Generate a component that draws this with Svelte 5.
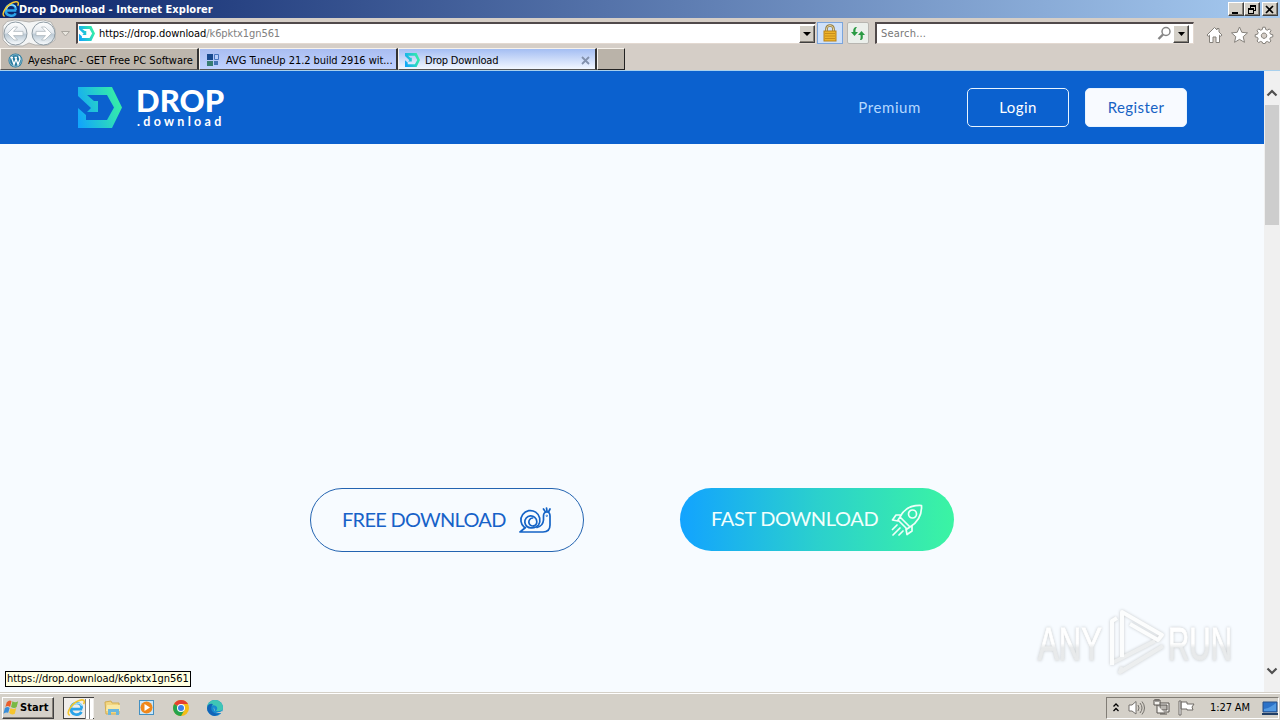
<script>
  const address = { host: 'drop.download', path: '/k6pktx1gn561' };

  let tabs = [
    { title: 'AyeshaPC - GET Free PC Software', icon: 'wordpress' },
    { title: 'AVG TuneUp 21.2 build 2916 wit...', icon: 'squares' },
    { title: 'Drop Download', icon: 'drop' }
  ];
  let current = 2;
</script>

{#snippet drop(size)}
  <svg class="drop" width={size} height={size * 41 / 44} viewBox="0 0 44 41" preserveAspectRatio="none">
    <defs>
      <linearGradient id="drop{size}" x1="0" y1="0.8" x2="1" y2="0.5">
        <stop offset="0" stop-color="#12a5fb" />
        <stop offset="1" stop-color="#36efa6" />
      </linearGradient>
    </defs>
    <path fill="url(#drop{size})" d="M0 0H34L44 20.5L34 41H0V21L8 28V33H29L36 20.5L29 8H9L16 14H20V25H9L13 21L0 9Z" />
  </svg>
{/snippet}

{#snippet explorer(size)}
  <svg width={size} height={size} viewBox="0 0 16 16" fill="none">
    <path d="M13.5 9H4.4M13.1 8.5C13 1.8 4 2 3.5 8.5C3.3 14.8 11 15.2 12.8 11.5" stroke="#2ba4ea" stroke-width="2.4" />
    <path d="M13 6C12 2.8 5.5 2.5 4.2 8" stroke="#a5e6ff" stroke-width="1" />
    <path d="M2.5 14.5C-2 13 5 2 13 .8C16 .5 15.7 3 14.7 4.5" stroke="#f3c630" stroke-width="1.4" />
  </svg>
{/snippet}

<div class="screen">
  <header class="titlebar">
    {@render explorer(17)}
    <span class="title">Drop Download - Internet Explorer</span>
    <div class="controls">
      <button title="Minimize"><svg width="10" height="9"><path d="M1 7H7V9H1Z" /></svg></button>
      <button title="Restore"><svg width="10" height="9"><path d="M3 0H9V6H7V5H8V2H4V3H3ZM1 3H7V9H1ZM2 5V8H6V5Z" fill-rule="evenodd" /></svg></button>
      <button class="close" title="Close"><svg width="10" height="9"><path d="M1 1L8 8M8 1L1 8" stroke="#000" stroke-width="1.7" /></svg></button>
    </div>
  </header>

  <div class="toolbar">
    <svg class="history" width="76" height="29" viewBox="0 0 76 29">
      <defs>
        <linearGradient id="round" x2="0" y2="1">
          <stop offset="0" stop-color="#fff" />
          <stop offset=".45" stop-color="#e4e9ee" />
          <stop offset=".55" stop-color="#bccad5" />
          <stop offset="1" stop-color="#fafdff" />
        </linearGradient>
      </defs>
      <path d="M7 3.5Q15 .5 23 3Q29 5 35 3Q44 .5 51 4L55 11V22L48 27H35L29 25L23 28H9L3 22V8Z" fill="#f4f5f5" stroke="#b5b3b0" />
      <g fill="url(#round)" stroke="#8e9ba4">
        <circle cx="15.5" cy="15.5" r="11.5" /><circle cx="43.5" cy="15.5" r="11.5" />
      </g>
      <g fill="#fff" stroke="#a8b1b8" stroke-width=".7">
        <path d="M7.5 15.5L14 9H17.5L13.5 13.4H23V17.6H13.5L17.5 22H14Z" />
        <path d="M51.5 15.5L45 9H41.5L45.5 13.4H36V17.6H45.5L41.5 22H45Z" />
      </g>
      <path d="M61.5 13.5H69.5L65.5 18Z" fill="#e9e6df" stroke="#aaa69f" />
    </svg>

    <div class="field address">
      {@render drop(16)}
      <span class="url"><b>https://{address.host}</b>{address.path}</span>
      <button class="down"><svg width="8" height="4"><path d="M0 0H8L4 4Z" /></svg></button>
    </div>

    <div class="lock">
      <svg width="16" height="18" viewBox="0 0 16 18">
        <path d="M4.5 9V5Q4.5 1.5 8 1.5Q11.5 1.5 11.5 5V9" fill="none" stroke="#91783c" stroke-width="2.6" />
        <path d="M4.5 8V5Q4.5 1.5 8 1.5Q11.5 1.5 11.5 5V8" fill="none" stroke="#e4d7a6" />
        <rect x="2" y="7" width="12" height="10" fill="#edb32a" stroke="#b98216" />
        <path d="M3 9.5H13M3 12H13M3 14.5H13" stroke="#c78c19" />
      </svg>
    </div>
    <div class="refresh">
      <svg width="16" height="15" viewBox="0 0 16 15" fill="#2a9a43">
        <path d="M7 1C4 1 3 3 3.3 6H1L4.5 10L8 6H5.5C5.3 4 5.6 2.5 7 1Z" />
        <path d="M10 14C13 14 13 12 12.7 9H15L11.5 5L8 9H10.5C10.7 11 10.8 12 10 14Z" />
      </svg>
    </div>

    <div class="field search">
      <span>Search...</span>
      <svg width="15" height="15" viewBox="0 0 15 15" fill="none" stroke="#858585">
        <circle cx="9" cy="5.5" r="4" stroke-width="1.5" /><path d="M6 8.5L1.5 13" stroke-width="2.4" />
      </svg>
      <button class="down"><svg width="7" height="4"><path d="M0 0H7L3.5 4Z" /></svg></button>
    </div>

    <svg class="tools" width="68" height="18" viewBox="0 0 68 18" fill="#fff" stroke="#85817b">
      <path d="M1 9L8.5 1.5L11 4V2.5H13V6L16 9L14.8 10.4L13.5 9.2V16.5H10V11H7V16.5H3.5V9.2L2.2 10.4Z" />
      <path d="M33.5 1L35.8 6.3L41.5 6.9L37.2 10.7L38.5 16.3L33.5 13.4L28.5 16.3L29.8 10.7L25.5 6.9L31.2 6.3Z" />
      <path fill-rule="evenodd" d="M56.8 1.2H59.2L59.7 3.5L61.4 4.2L63.3 2.9L65 4.7L63.8 6.6L64.5 8.2L66.8 8.7V10.9L64.5 11.4L63.8 13L65 15L63.2 16.6L61.4 15.4L59.7 16.1L59.2 17.5H56.8L56.3 16.1L54.6 15.4L52.7 16.6L51 15L52.2 13L51.5 11.4L49.2 10.9V8.7L51.5 8.2L52.2 6.6L51 4.7L52.7 2.9L54.6 4.2L56.3 3.5ZM58 7A2.7 2.7 0 1 0 58.1 7Z" />
    </svg>
  </div>

  <nav class="tabs">
    {#each tabs as tab, i}
      <button class="tab {tab.icon}" class:active={i === current}>
        {#if tab.icon === 'wordpress'}
          <svg width="15" height="15" viewBox="0 0 15 15">
            <circle cx="7.5" cy="7.5" r="7" fill="#277b9f" />
            <circle cx="7.5" cy="7.5" r="5.8" fill="none" stroke="#e2eff4" stroke-width=".5" />
            <path d="M2.5 4.5H5M6.5 4.5H9M3.5 4.5L6 11.5L8 6M7.5 4.5L10 11.5L12 6Q11 4 11 3" fill="none" stroke="#fff" stroke-width="1.3" />
          </svg>
        {:else if tab.icon === 'squares'}
          <svg width="15" height="15" viewBox="0 0 15 15">
            <path d="M1 1H7V7H1Z" fill="#17498e" /><path d="M1 8H7V13H1Z" fill="#377d73" /><path d="M8 8H12V12H8Z" fill="#4574b4" />
            <path d="M8.5 1.5H12.5V6.5H8.5Z" fill="#b8cdf8" stroke="#4774be" />
          </svg>
        {:else}
          {@render drop(15)}
        {/if}
        <span>{tab.title}</span>
        {#if i === current}
          <svg class="x" width="9" height="9"><path d="M1 1L8 8M8 1L1 8" stroke="#8291ac" stroke-width="1.8" /></svg>
        {/if}
      </button>
    {/each}
    <button class="new" title="New tab"></button>
  </nav>

  <div class="viewport">
    <main>
      <div class="header">
        <a class="brand" href="#home">
          {@render drop(44)}
          <span><strong>DROP</strong><small>.download</small></span>
        </a>
        <div class="account">
          <a href="#premium">Premium</a>
          <button class="login">Login</button>
          <button class="register">Register</button>
        </div>
      </div>

      <div class="downloads">
        <button class="free">
          <span>FREE DOWNLOAD</span>
          <svg width="32" height="28" viewBox="0 0 32 28" fill="none" stroke="#1463c6" stroke-width="1.7" stroke-linecap="round" stroke-linejoin="round">
            <path d="M5.5 21.5A9.5 9.5 0 1 1 19.5 19Q17 22 12.5 21.8A6 6 0 1 1 17.8 15.5A4 4 0 1 1 13.5 12" />
            <path d="M6.5 21.5L1 26H24Q31 26 31 19V10Q31 6 28 6Q24.5 6 24.5 10V14Q24 20 18 21.5M26.5 6L24.5 3M29.5 6L31 3M28 5L27.5 2" />
            <circle cx="27.8" cy="9.8" r=".3" />
          </svg>
        </button>
        <button class="fast">
          <span>FAST DOWNLOAD</span>
          <svg width="32" height="32" viewBox="0 0 32 32" fill="none" stroke="#effff8" stroke-width="1.7" stroke-linecap="round" stroke-linejoin="round">
            <path d="M9 13C13 5 21 1 30.5 1.5C31 10 27 18 19 23ZM9 13L7 16L16 25L19 23M10 11H5L1.5 16L7 17M21 21.5V27L16 30.5L15 25" />
            <circle cx="21.5" cy="10" r="4" />
            <path d="M6 21L1.5 25.5M9 24L2 31M12 27L8 31" />
          </svg>
        </button>
      </div>

      <svg class="watermark" width="210" height="70" viewBox="0 0 210 70">
        <defs>
          <linearGradient id="fade" x2="0" y2="1">
            <stop offset=".5" stop-color="#fff" /><stop offset=".58" stop-color="#e8eaeb" />
          </linearGradient>
        </defs>
        <g fill="url(#fade)">
          <text x="4" y="53" textLength="64" lengthAdjust="spacingAndGlyphs">ANY</text>
          <text x="134" y="53" textLength="64" lengthAdjust="spacingAndGlyphs">RUN</text>
        </g>
        <g fill="none" stroke="#eceeef" stroke-width="4" stroke-linejoin="round">
          <path d="M78 56L121 34M88 60L86 65L129 39" />
          <path d="M78 58V14L83 11M88 50V5L128 28L124 33L96 17" stroke="#fcfdfd" />
        </g>
      </svg>
      <div class="status">https://drop.download/k6pktx1gn561</div>
    </main>
    <aside class="scrollbar">
      <svg width="12" height="8"><path d="M1.5 6.5L6 2L10.5 6.5" /></svg>
      <div class="thumb"></div>
      <svg width="12" height="8"><path d="M1.5 1.5L6 6L10.5 1.5" /></svg>
    </aside>
  </div>

  <footer class="taskbar">
    <button class="start">
      <svg width="17" height="17" viewBox="0 0 18 17">
        <path d="M4 3Q7 0 9 2L7.5 8Q5 6 2.5 8Z" fill="#e95e2b" />
        <path d="M10 2Q13 4 16 2L14.5 8Q12 10 8.5 8Z" fill="#79b943" />
        <path d="M2 9Q5 7 7 9L5.5 14Q3 13 .5 15Z" fill="#388ed9" />
        <path d="M8 9Q11 11 14 9L12.5 15Q9 17 6.5 14Z" fill="#f6c52d" />
      </svg>
      <span>Start</span>
    </button>
    <div class="running">{@render explorer(18)}<i></i><i></i></div>
    <div class="pinned">
      <svg width="18" height="18" viewBox="0 0 18 18">
        <path d="M1 3L7 2L8 4H15V15H2Z" fill="#f2d681" stroke="#d2ad51" /><path d="M3 6H16V12H2Z" fill="#f9e9a5" />
        <path d="M4 16V10H15V16H12V13H7V16Z" fill="#69b7de" />
      </svg>
      <svg width="18" height="18" viewBox="0 0 18 18">
        <rect x="1.5" y="1.5" width="14" height="14" fill="#c9e7fa" stroke="#4390c2" /><circle cx="8.5" cy="8.5" r="6" fill="#ef871a" /><path d="M6.5 5V12L12 8.5Z" fill="#fff" />
      </svg>
      <svg width="18" height="18" viewBox="0 0 18 18">
        <circle cx="9" cy="9" r="8" fill="#f5bd16" /><path d="M9 9L2.1 5A8 8 0 0 1 16 5H9Z" fill="#e53f31" /><path d="M9 9L2.1 5A8 8 0 0 0 9 17L12.5 11Z" fill="#26a44d" />
        <circle cx="9" cy="9" r="4" fill="#fff" /><circle cx="9" cy="9" r="3" fill="#3d80e8" />
      </svg>
      <svg width="18" height="18" viewBox="0 0 18 18">
        <circle cx="9" cy="9" r="8" fill="#168bd0" /><path d="M1 9A8 8 0 0 1 17 9Q17 12 13 12H10Q12 10 11 8Q8 4 1 9Z" fill="#3fc6b5" />
        <path d="M1 9Q2 4 7 5Q4 8 6 12Q9 16 14 14Q8 20 3 14Q1 12 1 9Z" fill="#1264b7" /><path d="M8 8Q7 11 10 13Q13 14 16 12L17 14H12Q8 13 8 8Z" fill="#d4d0c8" />
      </svg>
    </div>
    <div class="tray">
      <svg width="8" height="12" fill="none" stroke="#000" stroke-width="1.3"><path d="M1.5 4.5L4 2L6.5 4.5M1.5 9L4 6.5L6.5 9" /></svg>
      <svg width="17" height="16" viewBox="0 0 17 16" fill="#fff" stroke="#74716c"><path d="M1 5H4L8 1.5V14L4 11H1Z" /><path d="M10 5Q12 8 10 11M12 3Q16 8 12 13M14 1.5Q19 8 14 14.5" fill="none" /></svg>
      <svg width="17" height="17" viewBox="0 0 17 17" fill="#f5f3ef" stroke="#56534f"><path d="M5 4H16V13H5Z" /><path d="M7 6H14V11H7Z" fill="#b9b6b1" /><path d="M1 1H7V6H1ZM3 0V3M5 0V3M4 6V14H12M7 15H14" /></svg>
      <svg width="17" height="16" viewBox="0 0 17 16" fill="#fff" stroke="#6f6b66"><path d="M1 1H3V15H1ZM3 2H9V4H16L14 7L15 10H9V9H3Z" /></svg>
      <time>1:27 AM</time>
      <svg width="16" height="14" viewBox="0 0 16 14"><path d="M1 1H15V11H1Z" fill="#2c72c8" stroke="#295187" /><path d="M2 8Q8 7 14 2V10H2Z" fill="#5299e1" /><path d="M0 12H16V14H0Z" fill="#203e65" /></svg>
    </div>
  </footer>
</div>

<style>
  :global(body) {
    margin: 0;
    overflow: hidden;
  }

  .screen {
    width: 1280px;
    height: 720px;
    display: flex;
    flex-direction: column;
    background: #d5cec7;
    color: #000;
    font: 11px 'DejaVu Sans Condensed', 'DejaVu Sans', sans-serif;
  }

  .screen * {
    box-sizing: border-box;
  }

  svg {
    display: block;
    flex: none;
  }

  button {
    padding: 0;
    font: inherit;
    color: inherit;
    white-space: nowrap;
  }

  .titlebar {
    height: 18px;
    display: flex;
    align-items: center;
    padding: 0 2px;
    background: linear-gradient(90deg, #0b246a, #a6caf0);
    color: #fff;
  }

  .title {
    font-weight: bold;
    letter-spacing: 0.04px;
  }

  .controls {
    display: flex;
    margin-left: auto;
  }

  .controls button, .down {
    width: 16px;
    height: 14px;
    display: grid;
    place-items: center;
    background: #d4d0c8;
    border: 1px solid;
    border-color: #fff #404040 #404040 #fff;
    box-shadow: inset -1px -1px #858078;
  }

  .controls .close {
    margin-left: 2px;
  }

  .toolbar {
    height: 30px;
    display: flex;
    align-items: flex-start;
  }

  .field {
    display: flex;
    align-items: center;
    height: 22px;
    margin-top: 4px;
    background: #fff;
    border: 1px solid;
    border-width: 2px 1px 1px 2px;
    border-color: #514a4b #e3d9d1 #e3d9d1 #514a4b;
    color: #777;
  }

  .address {
    width: 740px;
    padding-left: 1px;
  }

  .url {
    margin-left: 4px;
    letter-spacing: -0.08px;
    color: #808080;
  }

  .url b {
    color: #000;
    font-weight: normal;
  }

  .down {
    height: 18px;
    margin-left: auto;
  }

  .lock, .refresh {
    display: grid;
    place-items: center;
    width: 26px;
    height: 22px;
    margin: 4px 0 0 1px;
    background: #cfe1fa;
    border: 1px solid #7ba5dc;
  }

  .refresh {
    width: 22px;
    margin-left: 4px;
    background: #ebefeb;
    border-color: #b8b6b1;
    border-radius: 2px;
  }

  .search {
    width: 319px;
    margin-left: 6px;
    padding-left: 4px;
    letter-spacing: 0.2px;
  }

  .search svg {
    margin-left: auto;
  }

  .search .down {
    margin: 0 4px 0 1px;
  }

  .search .down svg {
    margin: 0;
  }

  .tools {
    margin: 8px 0 0 12px;
  }

  .tabs {
    height: 23px;
    display: flex;
    border-bottom: 1px solid #a8d0ed;
  }

  .tab {
    width: 199px;
    height: 22px;
    display: flex;
    align-items: center;
    gap: 5px;
    padding: 2px 5px 0 7px;
    border: 1px solid;
    border-color: #f7f2eb #333 #555 #f7f2eb;
    border-right-width: 2px;
    background: #bdb6ac;
  }

  .tab.squares {
    background: linear-gradient(#a9bdf0, #c0d2ff);
    padding-left: 6px;
    letter-spacing: -0.06px;
  }

  .tab.active {
    background: linear-gradient(#a4bef3, #f2f7ff);
    padding-left: 6px;
    letter-spacing: -0.22px;
  }

  .x {
    margin-left: auto;
  }

  .new {
    width: 28px;
    height: 22px;
    border: 1px solid;
    border-color: #f7f2eb #222 #222 #f7f2eb;
    background: #bab3a9;
  }

  .viewport {
    height: 621px;
    display: flex;
    flex: none;
  }

  main {
    position: relative;
    width: 1264px;
    background: #f7fbff;
    font-family: Lato, sans-serif;
  }

  .header {
    height: 73px;
    display: flex;
    align-items: center;
    justify-content: space-between;
    padding: 0 77px 0 78px;
    background: #0b61cf;
  }

  .brand {
    display: flex;
    gap: 14px;
    color: #fff;
    text-decoration: none;
  }

  .brand span {
    display: flex;
    flex-direction: column;
    height: 41px;
  }

  strong {
    font: 900 31px/27px Lato, sans-serif;
    letter-spacing: 0.1px;
  }

  small {
    padding-left: 1px;
    font: bold 12.5px/16px Lato, sans-serif;
    letter-spacing: 3.3px;
  }

  .account {
    display: flex;
    align-items: center;
    font-size: 15px;
    letter-spacing: 0.6px;
  }

  .account a {
    margin: -2px 46px 0 0;
    color: #b4d8ff;
    text-decoration: none;
  }

  .account button {
    width: 102px;
    height: 39px;
    padding-bottom: 2px;
    border: 1px solid #e8f4ff;
    border-radius: 5px;
    background: none;
    color: #fff;
    letter-spacing: 0.4px;
  }

  .account .register {
    margin-left: 16px;
    background: #f8faff;
    color: #1762c4;
  }

  .downloads {
    display: flex;
    gap: 96px;
    padding: 344px 0 0 310px;
  }

  .downloads button {
    display: flex;
    align-items: center;
    justify-content: space-between;
    width: 274px;
    height: 64px;
    padding: 0 32px 0 31px;
    border: 1px solid #2464b1;
    border-radius: 32px;
    background: none;
    color: #1762c8;
    font-size: 20px;
    letter-spacing: -0.72px;
  }

  .downloads span {
    padding-bottom: 3px;
  }

  .downloads .fast {
    height: 63px;
    padding-right: 31px;
    border: 0;
    background: linear-gradient(90deg, #12a3ff, #2bd0cd 50%, #3bf4a3);
    color: #f2fffc;
    letter-spacing: -0.34px;
  }

  .watermark {
    position: absolute;
    left: 1034px;
    top: 536px;
    filter: drop-shadow(0 0 1.5px #c6c9cb);
  }

  .watermark text {
    font: 47px 'Liberation Sans', sans-serif;
    stroke: url(#fade);
    stroke-width: 0.8px;
  }

  .status {
    position: absolute;
    left: 5px;
    bottom: 5px;
    height: 16px;
    padding: 0 1px;
    border: 1px solid #000;
    background: #ffffe1;
    font: 11px/14px 'DejaVu Sans Condensed', 'DejaVu Sans', sans-serif;
    letter-spacing: -0.06px;
  }

  .scrollbar {
    width: 16px;
    display: flex;
    flex-direction: column;
    align-items: center;
    padding: 18px 0 17px;
    background: #f0f0f0;
  }

  .scrollbar svg {
    fill: none;
    stroke: #505050;
    stroke-width: 2.2;
  }

  .thumb {
    width: 14px;
    height: 120px;
    margin: 8px 0 auto;
    background: #cdcdcd;
  }

  .taskbar {
    height: 28px;
    display: flex;
    align-items: center;
    padding: 2px 1px 0 2px;
    background: #d4d0c8;
    border-top: 1px solid #d4d0c8;
    box-shadow: inset 0 1px #fff;
  }

  .start {
    display: flex;
    align-items: center;
    width: 52px;
    height: 22px;
    border: 1px solid;
    border-color: #fff #404040 #404040 #fff;
    background: #d4d0c8;
    box-shadow: inset -1px -1px #858078;
    font-weight: bold;
    letter-spacing: 0.1px;
  }

  .running {
    display: flex;
    width: 31px;
    height: 22px;
    margin-left: 9px;
    padding: 1px 0 0 3px;
    border: 1px solid #404040;
    border-right: 0;
    background: #f0eeeb;
  }

  .running i {
    width: 4px;
    height: 20px;
    border-left: 1px solid #888;
    background: #fff;
  }

  .pinned {
    display: flex;
    gap: 16px;
    margin-left: 10px;
  }

  .tray {
    display: flex;
    align-items: center;
    width: 173px;
    height: 22px;
    margin-left: auto;
    padding-left: 5px;
    border: 1px solid;
    border-color: #817d76 #fff #fff #817d76;
  }

  .tray svg {
    margin-right: 8px;
  }

  .tray time {
    width: 42px;
    margin-left: 7px;
    letter-spacing: -0.1px;
    white-space: nowrap;
  }

  .tray svg:last-child {
    margin: 0 0 0 auto;
  }
</style>
